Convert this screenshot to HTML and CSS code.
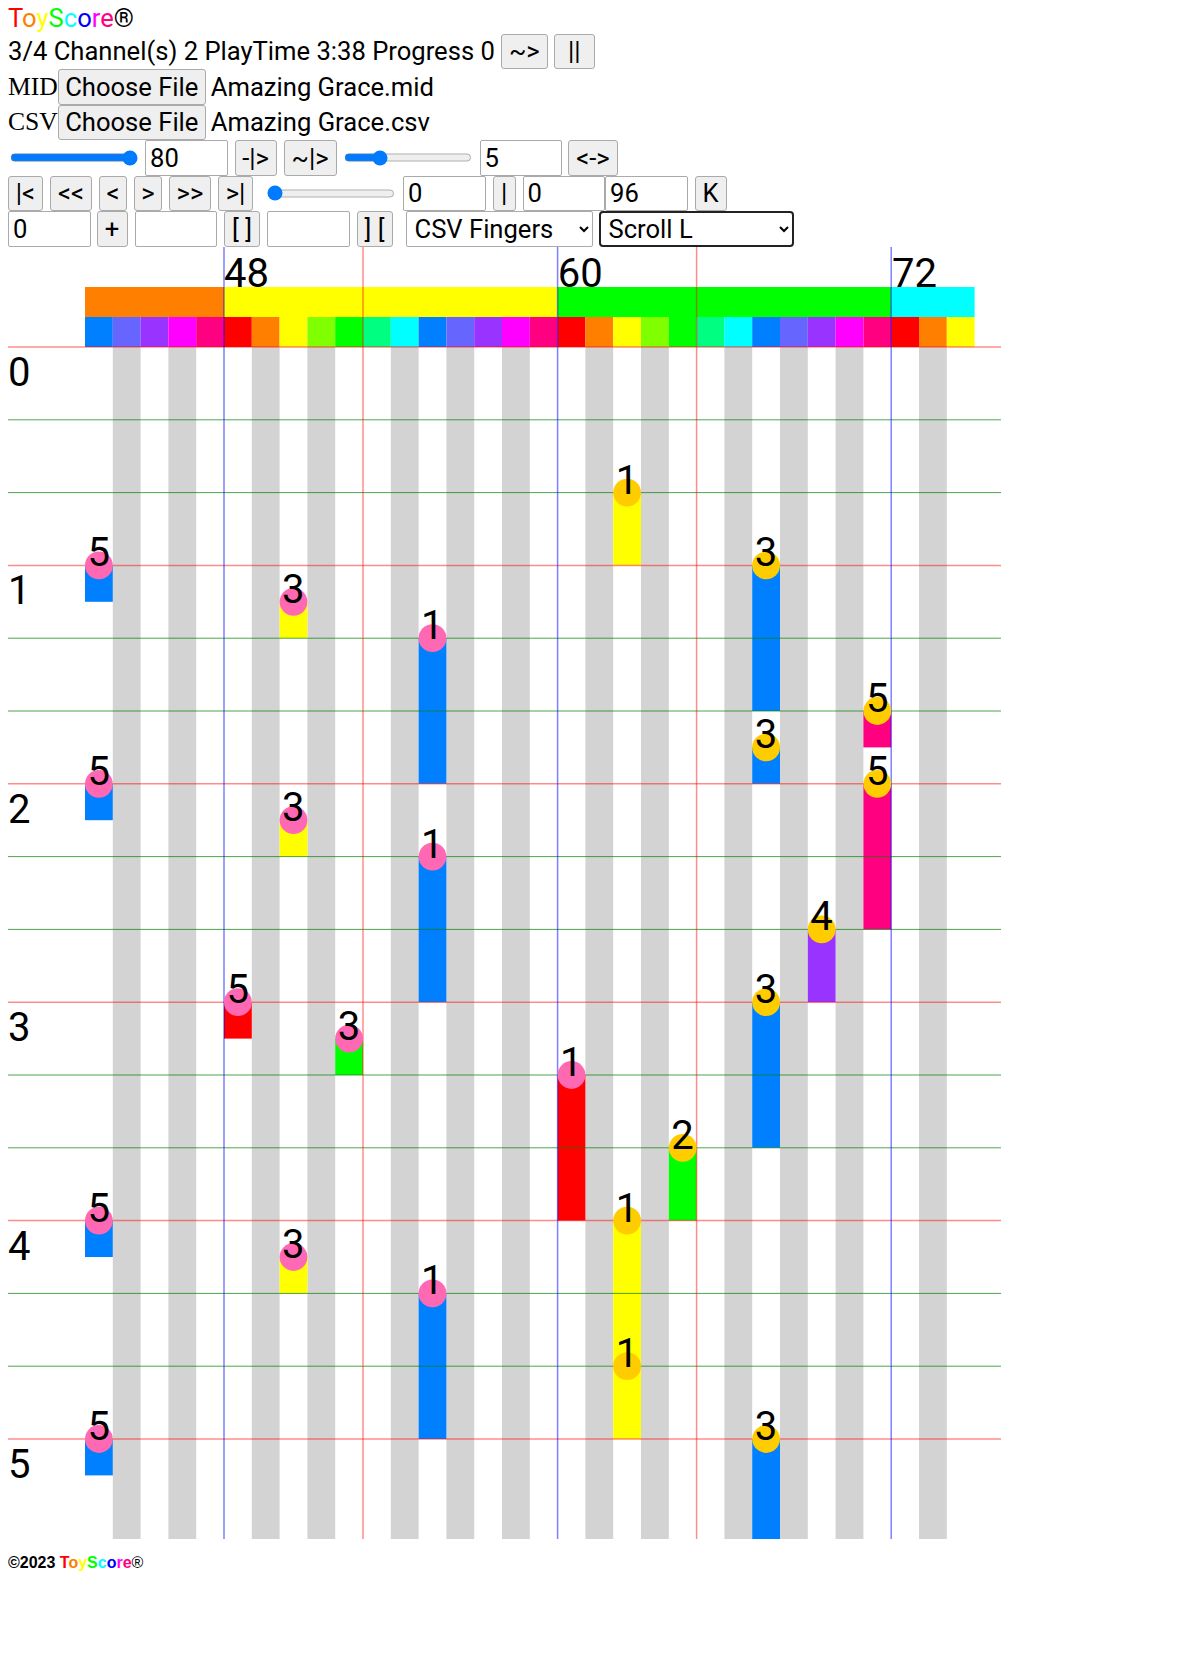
FILE: index.html
```html
<!DOCTYPE html>
<html lang="en">
<head>
<meta charset="utf-8">
<title>ToyScore</title>
<link rel="stylesheet" href="styles.css">
</head>
<body>
<div class="title"><span class="c0">T</span><span class="c1">o</span><span class="c2">y</span><span class="c3">S</span><span class="c4">c</span><span class="c5">o</span><span class="c6">r</span><span class="c7">e</span>®</div>
<div class="row row-status"><span>3/4 Channel(s) 2 PlayTime 3:38 Progress 0</span><button class="btn w-play">~&gt;</button><button class="btn w-pause">||</button></div>
<div class="row"><span class="serif">MID</span><button class="btn w-file">Choose File</button><span class="fname">Amazing Grace.mid</span></div>
<div class="row"><span class="serif">CSV</span><button class="btn w-file">Choose File</button><span class="fname">Amazing Grace.csv</span></div>
<div class="row">
  <input class="range r-a" type="range" min="0" max="100" value="100">
  <input class="field" value="80">
  <button class="btn w-a">-|&gt;</button>
  <button class="btn w-b">~|&gt;</button>
  <input class="range r-b" type="range" min="0" max="100" value="25">
  <input class="field f-5" value="5">
  <button class="btn w-c">&lt;-&gt;</button>
</div>
<div class="row row-nav">
  <button class="btn n1">|&lt;</button>
  <button class="btn n2">&lt;&lt;</button>
  <button class="btn n3">&lt;</button>
  <button class="btn n3">&gt;</button>
  <button class="btn n2">&gt;&gt;</button>
  <button class="btn n1">&gt;|</button>
  <input class="range r-c" type="range" min="0" max="100" value="0">
  <input class="field" value="0">
  <button class="btn n4">|</button>
  <input class="field" value="0">
  <input class="field" value="96">
  <button class="btn n5">K</button>
</div>
<div class="row row-last">
  <input class="field" value="0">
  <button class="btn n6">+</button>
  <input class="field" value="">
  <button class="btn n7">[ ]</button>
  <input class="field" value="">
  <button class="btn n7">] [</button>
  <select class="sel s-a"><option>CSV Fingers</option></select>
  <select class="sel s-b"><option>Scroll L</option></select>
</div>
<svg class="score" width="1192" height="1306" viewBox="8 248 1192 1306" xmlns="http://www.w3.org/2000/svg">
  <g id="cols"></g>
</svg>
<div class="foot">©2023 <span class="c0">T</span><span class="c1">o</span><span class="c2">y</span><span class="c3">S</span><span class="c4">c</span><span class="c5">o</span><span class="c6">r</span><span class="c7">e</span><span class="reg">®</span></div>
<script src="score.js"></script>
</body>
</html>
```
FILE: styles.css
```css
* { box-sizing: border-box; }
html, body { margin: 0; padding: 0; background: #fff; }
body { padding: 0 8px; font: 25.6px/30px Roboto, sans-serif; color: #000; width: 1200px; height: 1662px; overflow: hidden; }
.title { height: 33.5px; padding-top: 3px; }
.row { display: flex; align-items: center; height: 35.5px; white-space: nowrap; }
.serif { font-family: "Liberation Serif", serif; }
.fname { margin-left: 5px; }
.btn, .field, .sel { font: 25.6px Roboto, sans-serif; height: 35.5px; color: #000; margin: 0; }
.btn { background: #efefef; border: 1px solid #aaa; border-radius: 3px; padding: 0; }
.field { width: 82.5px; border: 1px solid #aaa; border-radius: 2px; padding: 0 4px; background: #fff; }
.sel { background: #fff; border: 1px solid #aaa; border-radius: 2px; padding: 0 0 0 4px; }
.s-a { width: 187px; margin-left: 6px; }
.s-b { width: 195px; margin-left: 6px; border: 2px solid #222; border-radius: 4px; }
.w-play { width: 47px; margin-left: 6px; }
.w-pause { width: 41px; margin-left: 6px; }
.w-file { width: 148px; }
.range { margin: 0; height: 35px; accent-color: #007bff; }
.r-a { width: 128px; margin: 0 7px 0 2px; }
.r-b { width: 128px; margin: 0 8px 0 7px; }
.r-c { width: 128px; margin: 0 8px 0 7px; }
.w-a { width: 42px; margin: 0 7px; }
.w-b { width: 53px; margin-right: 0; }
.f-5 { }
.w-c { width: 50px; margin-left: 6px; }
.row-nav .btn { margin-right: 7px; }
.n1 { width: 35px; }
.n2 { width: 42px; }
.n3 { width: 28px; }
.n4 { width: 23px; margin-left: 7px; }
.n5 { width: 32px; margin-left: 7px; }
.n6 { width: 31px; margin: 0 7px 0 6px; }
.n7 { width: 36px; margin: 0 7px; }
.score { display: block; }
.foot { margin-top: 0; font: bold 16px/20px "Liberation Sans", sans-serif; }
.reg { font-weight: normal; }
.c0 { color: #ff0000; } .c1 { color: #ff8000; } .c2 { color: #ffff00; } .c3 { color: #00ff00; }
.c4 { color: #00ffff; } .c5 { color: #0000ff; } .c6 { color: #ff00ff; } .c7 { color: #ff0080; }
.lbl { font: 40px Roboto, sans-serif; fill: #000; }
.grid-r { stroke: rgba(255,0,0,.45); stroke-width: 1.5; }
.grid-g { stroke: rgba(0,128,0,.7); stroke-width: 1; }
.vl-b { stroke: rgba(0,0,255,.5); stroke-width: 1.5; }
.vl-r { stroke: rgba(255,0,0,.45); stroke-width: 1.5; }
```
FILE: score.js
```js
var K=27.8,X=function(n){return 224+(n-48)*K},Y=function(t){return 348+72.8*t};
var pc=['#ff0000','#ff8000','#ffff00','#80ff00','#00ff00','#00ff80','#00ffff','#0080ff','#6666ff','#9933ff','#ff00ff','#ff0080'];
var s='';function R(x,y,w,h,f){s+='<rect x="'+x+'" y="'+y+'" width="'+w+'" height="'+h+'" fill="'+f+'"/>'}
function L(a,b,c,d,k){s+='<line x1="'+a+'" y1="'+b+'" x2="'+c+'" y2="'+d+'" class="'+k+'"/>'}
function T(x,y,t){s+='<text class="lbl" x="'+x+'" y="'+y+'">'+t+'</text>'}
for(var n=43;n<=74;n++){if([1,3,6,8,10].indexOf(n%12)>=0)R(X(n),348,K,1192,'#d3d3d3')}
T(224,288,48);T(557.7,288,60);T(892,288,72);
R(X(43),288,X(48)-X(43),30,'#ff8000');R(X(48),288,K*12,30,'#ffff00');R(X(60),288,K*12,30,'#00ff00');R(X(72),288,K*3,30,'#00ffff');
for(n=43;n<=74;n++)R(X(n),318,K,30,pc[n%12]);
var N=[[43,3,3.5,5,0],[50,3.5,4,3,0],[55,4,6,1,0],[62,2,3,1,1],[67,3,5,3,1],[71,5,5.5,5,1],[67,5.5,6,3,1],[43,6,6.5,5,0],[50,6.5,7,3,0],[55,7,9,1,0],[71,6,8,5,1],[69,8,9,4,1],[67,9,11,3,1],[48,9,9.5,5,0],[52,9.5,10,3,0],[60,10,12,1,0],[64,11,12,2,1],[62,12,14,1,1],[62,14,15,1,1],[43,12,12.5,5,0],[50,12.5,13,3,0],[55,13,15,1,0],[43,15,15.5,5,0],[67,15,16.374,3,1]];
N.forEach(function(a){R(X(a[0]),Y(a[1]),K,Y(a[2])-Y(a[1]),pc[a[0]%12])});
for(var i=0;i<=15;i++)L(8,Y(i),1001,Y(i),i%3?'grid-g':'grid-r');
[[48,'vl-b'],[53,'vl-r'],[60,'vl-b'],[65,'vl-r'],[72,'vl-b']].forEach(function(v){L(X(v[0]),248,X(v[0]),1540,v[1])});
N.forEach(function(a){s+='<circle cx="'+(X(a[0])+K/2)+'" cy="'+Y(a[1])+'" r="13.9" fill="'+(a[4]?'#ffcc00':'#ff69b4')+'"/>'});
N.forEach(function(a){T(X(a[0])+2.5,Y(a[1])+1,a[3])});
for(i=0;i<=5;i++)T(8,Y(i*3)+39,i);
document.getElementById('cols').innerHTML=s;
document.querySelector('.foot').style.marginTop='0';
```
